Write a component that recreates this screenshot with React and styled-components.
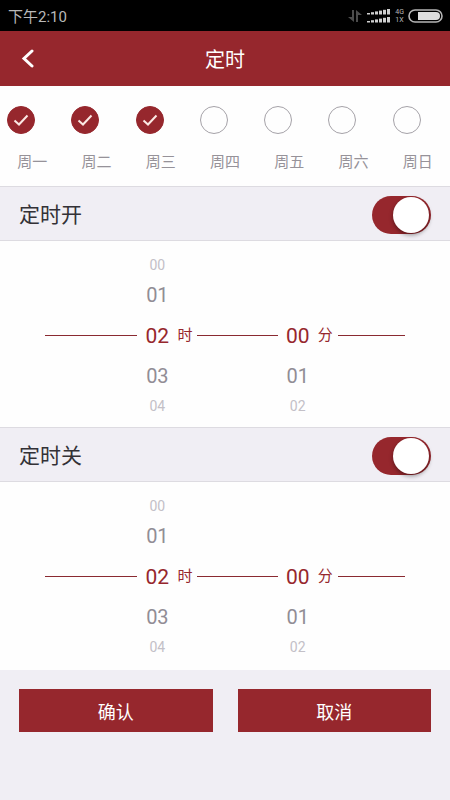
import React, { useState } from "react";
import styled, { createGlobalStyle } from "styled-components";

const GlobalStyle = createGlobalStyle`
  * {
    box-sizing: border-box;
  }
  body {
    margin: 0;
    background: #f0eef4;
    font-family: Roboto, "Noto Sans CJK SC", sans-serif;
  }
  button {
    font-family: inherit;
    border: none;
    cursor: pointer;
  }
`;

const StatusBar = styled.div`
  height: 31px;
  padding: 0 7px 0 8px;
  display: flex;
  align-items: center;
  justify-content: space-between;
  background: #000;
  color: #b9b9b9;
  font-size: 15px;
`;
const StatusIcons = styled.div`
  display: flex;
  align-items: center;
  gap: 4px;
`;
const NetworkType = styled.div`
  display: flex;
  flex-direction: column;
  font-size: 7px;
  line-height: 8px;
`;
const Header = styled.header`
  height: 55px;
  display: grid;
  grid-template-columns: 56px 1fr 56px;
  align-items: center;
  background: #96272d;
  color: #fff;
`;
const BackButton = styled.button`
  height: 55px;
  padding: 0;
  display: flex;
  align-items: center;
  justify-content: center;
  background: none;
`;
const Title = styled.h1`
  margin: 0;
  font-size: 20px;
  font-weight: 400;
  text-align: center;
`;
const Week = styled.div`
  height: 100px;
  display: grid;
  grid-template-columns: repeat(7, 1fr);
  background: #fefefe;
`;
const Day = styled.label`
  padding-top: 20px;
  display: flex;
  flex-direction: column;
  gap: 17px;
  color: #969299;
  font-size: 15px;
  line-height: 22px;
  text-align: center;
  cursor: pointer;
`;
const DayMark = styled.span`
  width: 28px;
  height: 28px;
  margin-left: 7px;
  display: grid;
`;
const DayInput = styled.input`
  grid-area: 1 / 1;
  width: 28px;
  height: 28px;
  margin: 0;
  appearance: none;
  border: 1px solid #a5a2a8;
  border-radius: 50%;
  background: #fefefe;
  &:checked {
    border-color: #96272d;
    background: #96272d;
  }
`;
const CheckIcon = styled.svg`
  grid-area: 1 / 1;
  width: 28px;
  height: 28px;
  pointer-events: none;
`;
const SectionBar = styled.label`
  height: 55px;
  padding: 0 19px 2px;
  display: flex;
  align-items: center;
  justify-content: space-between;
  border-top: 1px solid #dddbe1;
  border-bottom: 1px solid #dddbe1;
  color: #333136;
  font-size: 21px;
`;
const Switch = styled.input`
  width: 59px;
  height: 38px;
  margin: 4px 0 0;
  padding: 0 2px;
  display: flex;
  align-items: center;
  justify-content: flex-start;
  appearance: none;
  border-radius: 19px;
  background: #c9c6cd;
  cursor: pointer;
  &::before {
    content: "";
    width: 36px;
    height: 36px;
    border-radius: 50%;
    background: #fff;
    box-shadow: 0 2px 4px rgba(0, 0, 0, 0.4);
  }
  &:checked {
    justify-content: flex-end;
    background: #96272d;
  }
`;
const Picker = styled.div`
  padding: 12px 45px 9px;
  display: grid;
  grid-template-columns: 92fr 40px 20px 80fr 40px 20px 67fr;
  align-items: center;
  background: #fefefe;
`;
const Line = styled.span`
  height: 1px;
  background: #8a2a31;
`;
const Unit = styled.span`
  padding-bottom: 2px;
  color: #96272d;
  font-size: 15px;
  line-height: 20px;
`;
const Wheel = styled.div`
  display: grid;
  grid-template-rows: 24px 36px 45px 36px 24px;
`;
const WHEEL_SIZES = { 0: "21px", 1: "20px", 2: "14px" };
const WHEEL_COLORS = { 0: "#96272d", 1: "#918d95", 2: "#c3c0c7" };
const WheelItem = styled.button`
  padding: 0;
  background: none;
  color: ${(props) => WHEEL_COLORS[props.$distance]};
  font-size: ${(props) => WHEEL_SIZES[props.$distance]};
`;
const Actions = styled.div`
  padding: 19px;
  display: grid;
  grid-template-columns: 1fr 1fr;
  gap: 25px;
  border-top: 2px solid #fefefe;
`;
const ActionButton = styled.button`
  height: 43px;
  padding: 0;
  background: #96272d;
  color: #fff;
  font-size: 18px;
`;

const DAYS = ["周一", "周二", "周三", "周四", "周五", "周六", "周日"];

function NumberWheel({ label, value, max, onChange }) {
  return (
    <Wheel role="group" aria-label={label}>
      {[-2, -1, 0, 1, 2].map((offset) => {
        const number = value + offset;
        if (number < 0 || number > max) return <span key={offset} />;
        return (
          <WheelItem
            key={offset}
            type="button"
            $distance={Math.abs(offset)}
            onClick={() => onChange(number)}
          >
            {String(number).padStart(2, "0")}
          </WheelItem>
        );
      })}
    </Wheel>
  );
}

function Timer({ title }) {
  const [enabled, setEnabled] = useState(true);
  const [hour, setHour] = useState(2);
  const [minute, setMinute] = useState(0);
  return (
    <section>
      <SectionBar>
        {title}
        <Switch
          type="checkbox"
          role="switch"
          checked={enabled}
          onChange={() => setEnabled(!enabled)}
        />
      </SectionBar>
      <Picker>
        <Line />
        <NumberWheel label="时" value={hour} max={23} onChange={setHour} />
        <Unit>时</Unit>
        <Line />
        <NumberWheel label="分" value={minute} max={59} onChange={setMinute} />
        <Unit>分</Unit>
        <Line />
      </Picker>
    </section>
  );
}

function SignalIcons() {
  return (
    <>
      <svg width="16" height="16" viewBox="0 0 16 16" fill="#4c4c4c">
        <path d="M5 2h2v12L1 9h4zM9 14h2V7h4L9 2z" />
      </svg>
      <svg width="24" height="16" viewBox="0 0 24 16" fill="#d0d0d0">
        {[0, 1, 2, 3, 4, 5].map((i) => (
          <React.Fragment key={i}>
            <rect x={i * 4} y={5 - i * 0.8} width="3" height={1.5 + i * 0.8} />
            <rect x={i * 4} y={13 - i * 0.8} width="3" height={1.5 + i * 0.8} />
          </React.Fragment>
        ))}
      </svg>
    </>
  );
}

function App() {
  const [checkedDays, setCheckedDays] = useState([0, 1, 2]);

  const toggleDay = (day) => {
    setCheckedDays(
      checkedDays.includes(day)
        ? checkedDays.filter((item) => item !== day)
        : [...checkedDays, day]
    );
  };

  return (
    <>
      <GlobalStyle />
      <StatusBar>
        <span>下午2:10</span>
        <StatusIcons>
          <SignalIcons />
          <NetworkType>
            <span>4G</span>
            <span>1X</span>
          </NetworkType>
          <svg width="35" height="14" viewBox="0 0 35 14">
            <rect x="1" y="1" width="33" height="12" rx="6" fill="none" stroke="#b5b5b5" strokeWidth="1.6" />
            <path d="M10 3h18a4 4 0 0 1 0 8H10z" fill="#dedede" />
          </svg>
        </StatusIcons>
      </StatusBar>
      <Header>
        <BackButton type="button" aria-label="返回">
          <svg
            width="14"
            height="20"
            viewBox="0 0 14 20"
            fill="none"
            stroke="#fff"
            strokeWidth="3"
            strokeLinecap="round"
          >
            <path d="M11 2L3 9.500L11 17" />
          </svg>
        </BackButton>
        <Title>定时</Title>
      </Header>
      <main>
        <Week>
          {DAYS.map((day, index) => (
            <Day key={day}>
              <DayMark>
                <DayInput
                  type="checkbox"
                  checked={checkedDays.includes(index)}
                  onChange={() => toggleDay(index)}
                />
                {checkedDays.includes(index) && (
                  <CheckIcon viewBox="0 0 28 28" fill="none" stroke="#fbe9e4" strokeWidth="2">
                    <path d="M7.500 14.500L12 18.500L20.500 9.500" />
                  </CheckIcon>
                )}
              </DayMark>
              {day}
            </Day>
          ))}
        </Week>
        <Timer title="定时开" />
        <Timer title="定时关" />
        <Actions>
          <ActionButton type="button">确认</ActionButton>
          <ActionButton type="button">取消</ActionButton>
        </Actions>
      </main>
    </>
  );
}

export default App;
